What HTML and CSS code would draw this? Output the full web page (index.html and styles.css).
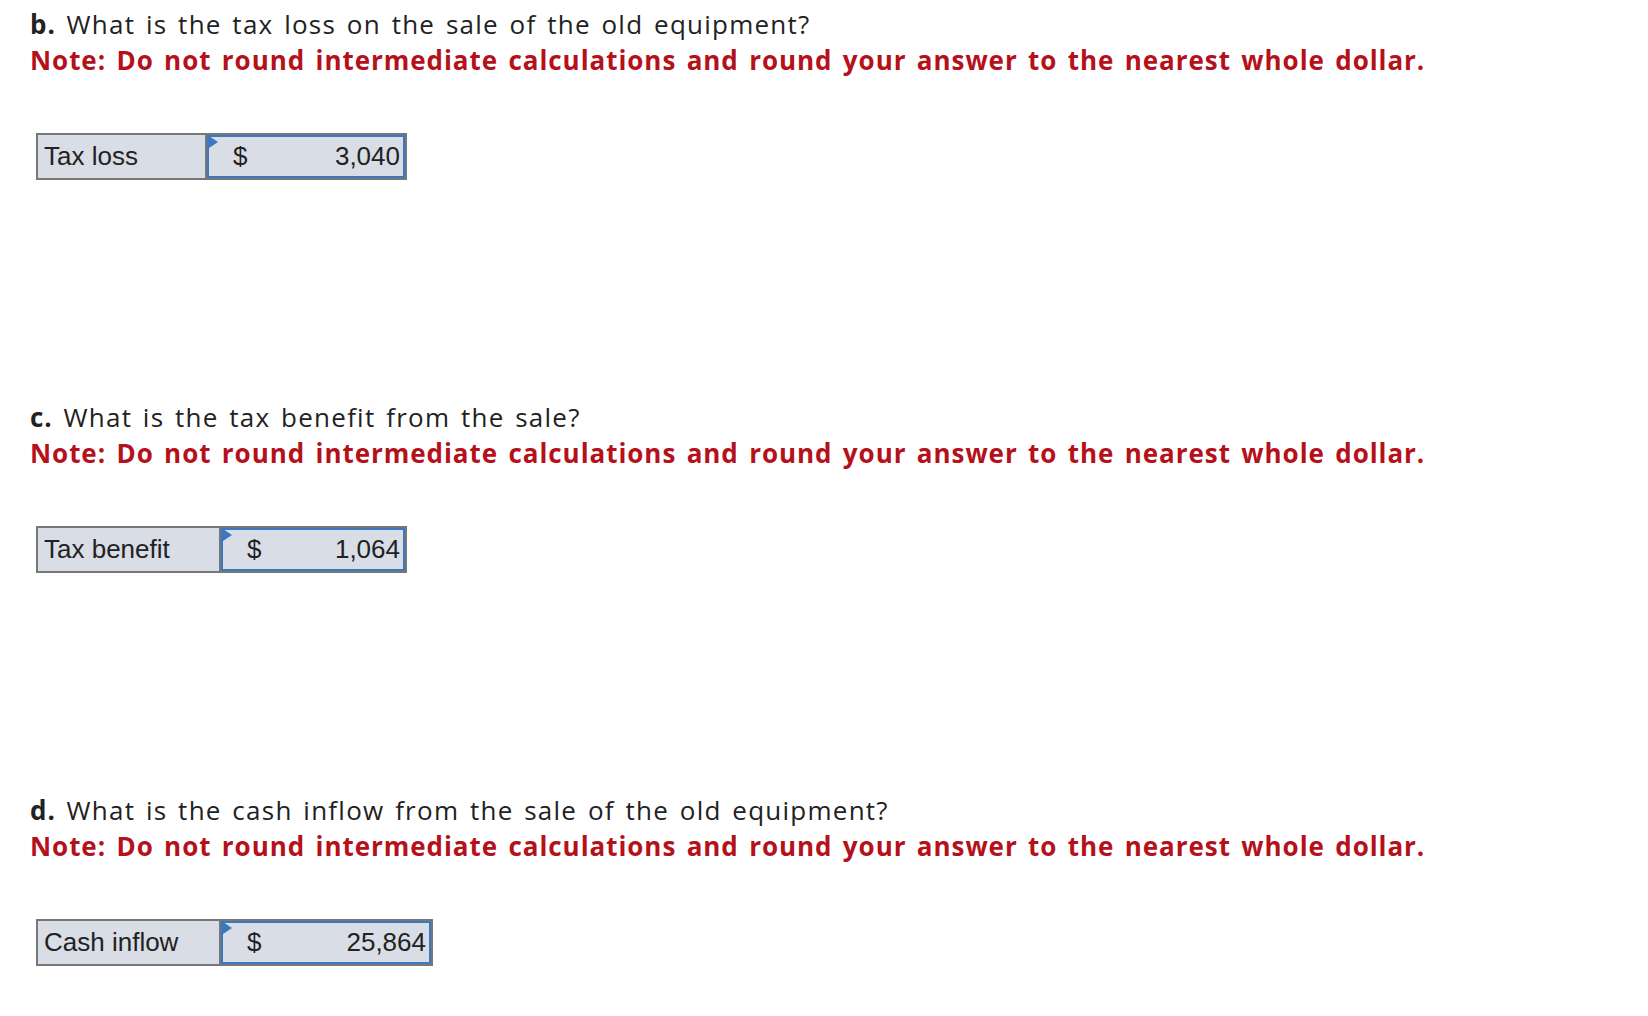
FILE: index.html
```html
<!DOCTYPE html>
<html>
<head>
<meta charset="utf-8">
<link rel="stylesheet" href="styles.css">
</head>
<body>
<div class="page">
  <section class="part">
    <p class="q"><b>b.</b> What is the tax loss on the sale of the old equipment?</p>
    <p class="note">Note: Do not round intermediate calculations and round your answer to the nearest whole dollar.</p>
    <div class="field f1">
      <div class="label">Tax loss</div>
      <div class="value"><span class="flag"></span><span class="cur">$</span><span class="num">3,040</span></div>
    </div>
  </section>
  <section class="part">
    <p class="q"><b>c.</b> What is the tax benefit from the sale?</p>
    <p class="note">Note: Do not round intermediate calculations and round your answer to the nearest whole dollar.</p>
    <div class="field f2">
      <div class="label">Tax benefit</div>
      <div class="value"><span class="flag"></span><span class="cur">$</span><span class="num">1,064</span></div>
    </div>
  </section>
  <section class="part">
    <p class="q"><b>d.</b> What is the cash inflow from the sale of the old equipment?</p>
    <p class="note">Note: Do not round intermediate calculations and round your answer to the nearest whole dollar.</p>
    <div class="field f3">
      <div class="label">Cash inflow</div>
      <div class="value"><span class="flag"></span><span class="cur">$</span><span class="num">25,864</span></div>
    </div>
  </section>
</div>
</body>
</html>
```
FILE: styles.css
```css
html, body {
  margin: 0;
  padding: 0;
  background: #ffffff;
}
.page {
  padding: 6px 0 0 30px;
  font-family: "Open Sans", Lato, sans-serif;
  color: #222222;
}
.part {
  display: flex;
  flex-direction: column;
  align-items: flex-start;
  margin-bottom: 219px;
}
.part:last-child {
  margin-bottom: 0;
}
.q {
  margin: 0;
  font-size: 26px;
  line-height: 36px;
  letter-spacing: 1.25px;
  word-spacing: 2.7px;
}
.q b {
  font-weight: 700;
  letter-spacing: 1px;
}
.note {
  margin: 0;
  font-size: 26px;
  line-height: 36px;
  font-weight: 700;
  letter-spacing: 0.95px;
  word-spacing: 2.7px;
  color: #b5111b;
}
.field {
  margin: 55px 0 0 6px;
  display: flex;
  box-sizing: border-box;
  height: 47px;
  border: 2px solid #777777;
  background: #d9dde6;
  font-family: "Liberation Sans", Arial, sans-serif;
  font-size: 26px;
  color: #222222;
}
.label {
  box-sizing: border-box;
  border-right: 2px solid #777777;
  padding-left: 6px;
  display: flex;
  align-items: center;
}
.value {
  position: relative;
  box-sizing: border-box;
  border: 2px solid #3b78c0;
  display: flex;
  align-items: center;
  justify-content: space-between;
  padding: 0 3px 0 24px;
}
.flag {
  position: absolute;
  left: 0;
  top: -1px;
  width: 0;
  height: 0;
  border-left: 9px solid #3b78c0;
  border-top: 6px solid transparent;
  border-bottom: 6px solid transparent;
}
.f1 { width: 371px; }
.f1 .label { width: 169px; }
.f1 .value { width: 198px; }
.f2 { width: 371px; }
.f2 .label { width: 183px; }
.f2 .value { width: 184px; }
.f3 { width: 397px; }
.f3 .label { width: 183px; }
.f3 .value { width: 210px; }
```
